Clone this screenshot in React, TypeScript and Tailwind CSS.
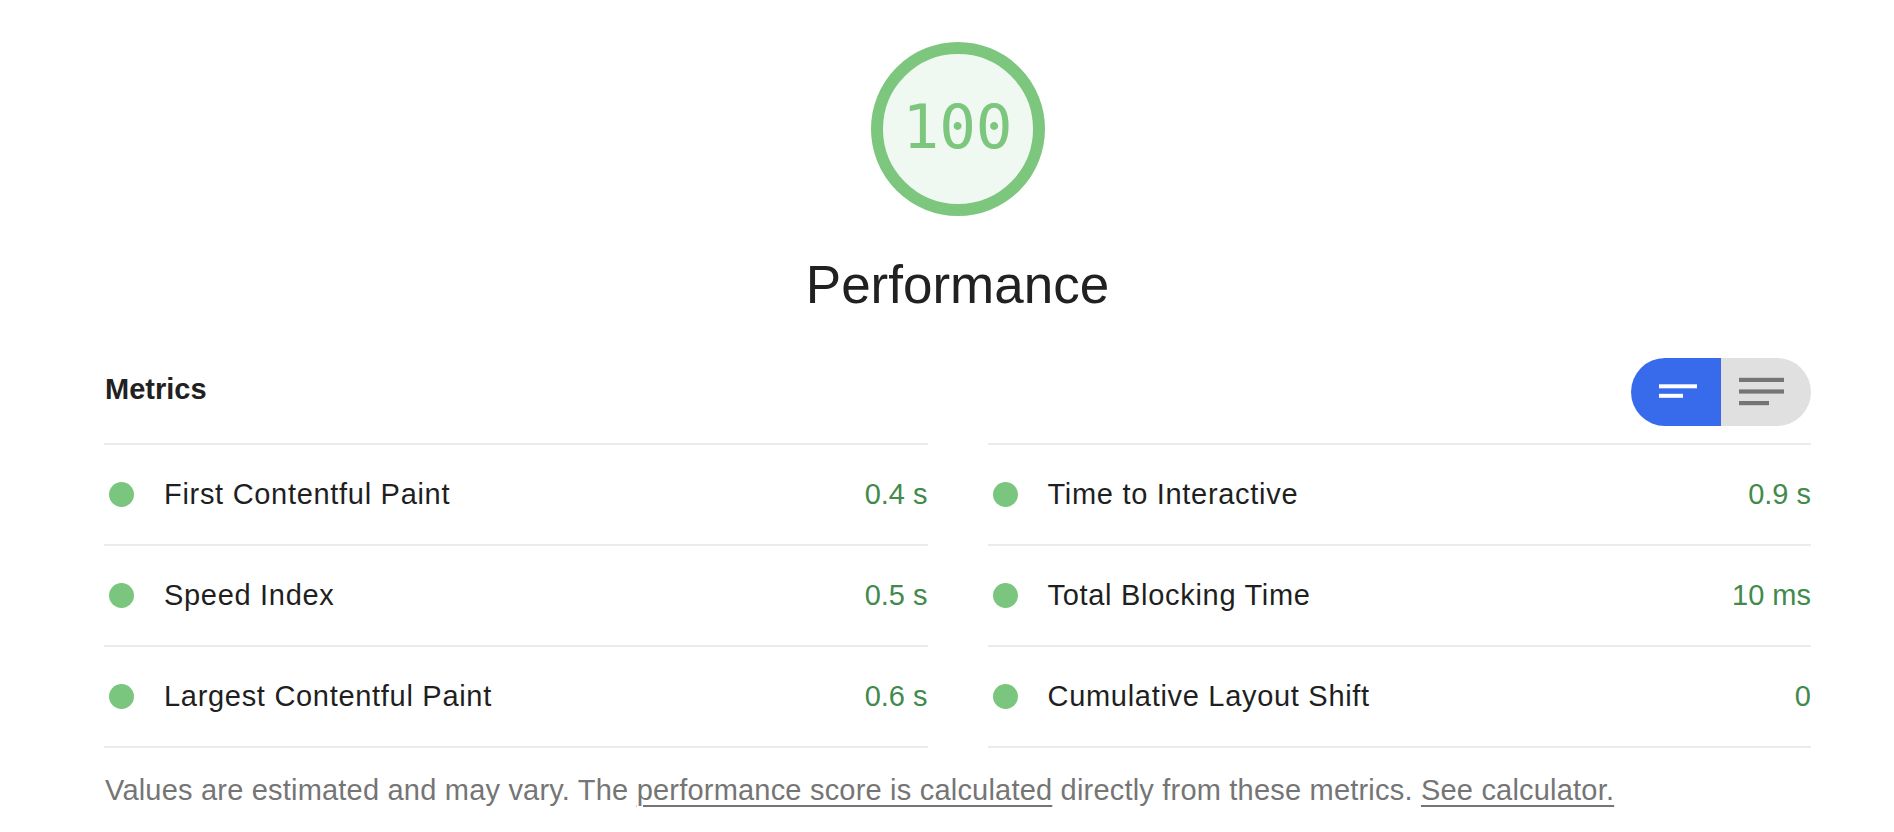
import React from 'react'

interface Metric {
  label: string
  value: string
}

const leftMetrics: Metric[] = [
  { label: 'First Contentful Paint', value: '0.4 s' },
  { label: 'Speed Index', value: '0.5 s' },
  { label: 'Largest Contentful Paint', value: '0.6 s' },
]

const rightMetrics: Metric[] = [
  { label: 'Time to Interactive', value: '0.9 s' },
  { label: 'Total Blocking Time', value: '10 ms' },
  { label: 'Cumulative Layout Shift', value: '0' },
]

const Gauge = () => (
  <div className="flex h-[174px] w-[174px] items-center justify-center rounded-full border-[12px] border-[#7cc67e] bg-[#eff8f1]">
    <span className="pb-[5px] font-['DejaVu_Sans_Mono',monospace] text-[61px] leading-none text-[#7cc67e]">
      100
    </span>
  </div>
)

const Toggle = () => (
  <div className="flex h-[68px] w-[180px] overflow-hidden rounded-full">
    <button className="h-full w-[90px] bg-[#386bec]" aria-label="Compact view">
      <svg width="90" height="68" viewBox="0 0 90 68">
        <rect x="28" y="26.3" width="38" height="4" fill="#fff" />
        <rect x="28" y="35.8" width="24" height="4" fill="#fff" />
      </svg>
    </button>
    <button className="h-full w-[90px] bg-[#e0e0e0]" aria-label="Expanded view">
      <svg width="90" height="68" viewBox="0 0 90 68">
        <rect x="18" y="19.8" width="45" height="4.2" fill="#757575" />
        <rect x="18" y="31.4" width="45" height="4.2" fill="#757575" />
        <rect x="18" y="43" width="30" height="4.2" fill="#757575" />
      </svg>
    </button>
  </div>
)

const MetricColumn = ({ items }: { items: Metric[] }) => (
  <div className="flex flex-col">
    {items.map((m, i) => (
      <div
        key={m.label}
        className={
          i === items.length - 1
            ? 'flex h-[103px] items-center border-y-2 border-[#ebebeb]'
            : 'flex h-[101px] items-center border-t-2 border-[#ebebeb]'
        }
      >
        <span className="ml-[5px] h-[25px] w-[25px] shrink-0 rounded-full bg-[#7bc67e]" />
        <span className="ml-[30px] text-[29px] leading-none tracking-[0.7px] text-[#1f1f1f]">{m.label}</span>
        <span className="ml-auto text-[29px] leading-none text-[#418a4c]">{m.value}</span>
      </div>
    ))}
  </div>
)

export default function App() {
  return (
    <div className="min-h-screen bg-white font-['Liberation_Sans',Arial,sans-serif] text-[#212121]">
      <div className="ml-[104px] w-[1707px] pt-[42px]">
        <div className="flex flex-col items-center">
          <Gauge />
          <h1 className="mt-[42px] text-[53px] font-normal leading-none">Performance</h1>
        </div>

        <div className="mt-[47px] flex items-center justify-between">
          <h2 className="pb-[6px] pl-[1px] text-[29px] font-bold leading-none">Metrics</h2>
          <Toggle />
        </div>

        <div className="mt-[17px] grid grid-cols-2 gap-x-[60px]">
          <MetricColumn items={leftMetrics} />
          <MetricColumn items={rightMetrics} />
        </div>

        <p className="mt-[28px] pl-[1px] text-[29px] leading-none tracking-[0.2px] text-[#757575]">
          Values are estimated and may vary. The{' '}
          <a href="#" className="underline decoration-[2px] underline-offset-[5px]">
            performance score is calculated
          </a>{' '}
          directly from these metrics.{' '}
          <a href="#" className="underline decoration-[2px] underline-offset-[5px]">
            See calculator.
          </a>
        </p>
      </div>
    </div>
  )
}
